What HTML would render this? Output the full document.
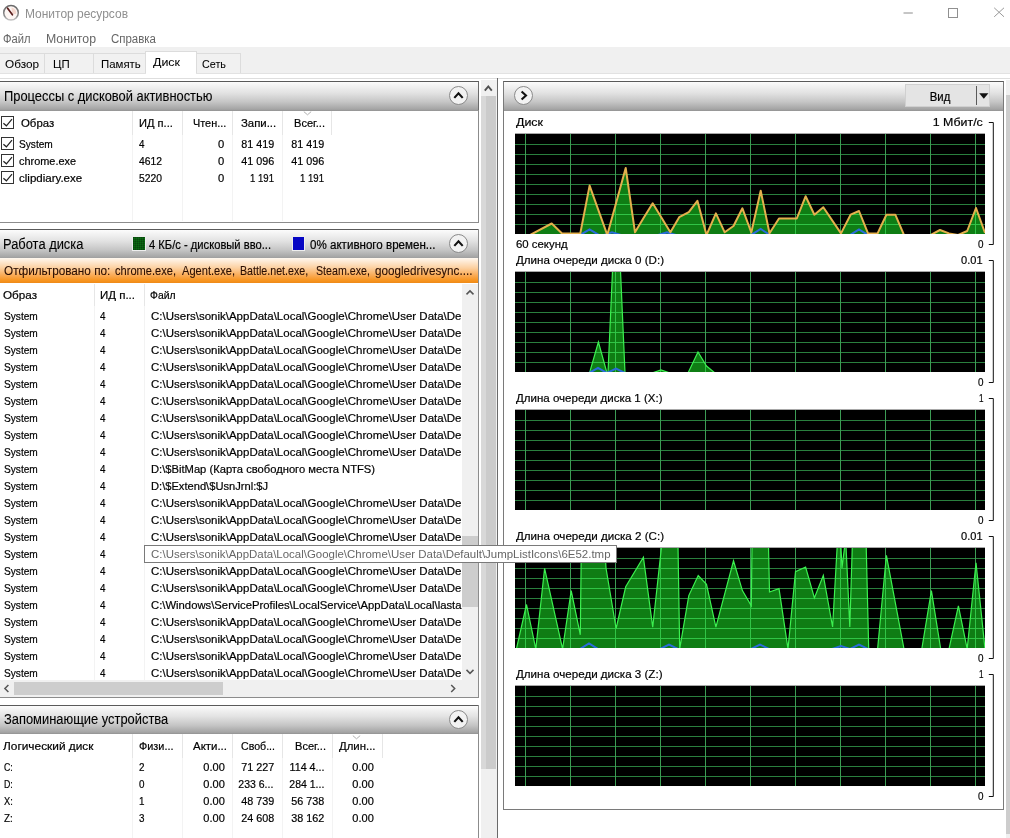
<!DOCTYPE html>
<html lang="ru"><head><meta charset="utf-8"><title>Монитор ресурсов</title>
<style>
html,body{margin:0;padding:0;}
body{width:1010px;height:838px;overflow:hidden;background:#fff;position:relative;font-family:"Liberation Sans",sans-serif;}
.a{position:absolute;}
.t{position:absolute;white-space:nowrap;}
#tx{position:absolute;left:0;top:0;width:1010px;height:838px;will-change:transform;}
.hdr{position:absolute;height:29px;border-top:1px solid #5a5a5a;background:linear-gradient(#fcfcfc 0%,#f2f2f2 14%,#e2e2e2 38%,#c6c6c6 68%,#a4a4a4 94%,#929292 100%);}
.circ{position:absolute;width:17px;height:17px;border:1px solid #8a8a8a;border-radius:50%;background:#f2f2f2;}
.cb{position:absolute;width:10px;height:10px;border:1px solid #333;background:#fff;}
.vd{position:absolute;width:1px;background:#e6e6e6;}
</style></head><body>
<svg class="a" style="left:1px;top:3px" width="20" height="20" viewBox="0 0 20 20">
<defs><linearGradient id="ig" x1="0" y1="0" x2="0" y2="1"><stop offset="0" stop-color="#6a6a6a"/><stop offset=".7" stop-color="#8a8a8a"/><stop offset="1" stop-color="#c4c4c4"/></linearGradient></defs>
<circle cx="10" cy="9.8" r="7.3" fill="#fdf6f3" stroke="url(#ig)" stroke-width="1.5"/>
<path d="M10.5 4.6 A5.3 5.3 0 0 1 15.2 10.8 L11.2 11.2 Z" fill="#f3cfc4" opacity=".8"/>
<path d="M6.6 5.2 L11.4 11.8" stroke="#5a1d1d" stroke-width="1.7" stroke-linecap="round"/>
</svg>
<svg class="a" style="left:890px;top:0" width="120" height="30" viewBox="0 0 120 30">
<path d="M13.5 13 H22.8" stroke="#8c8c8c" stroke-width="1"/>
<rect x="58.5" y="8.5" width="9" height="9" fill="none" stroke="#909090" stroke-width="1"/>
<path d="M104.2 7.8 L114 16.8 M114 7.8 L104.2 16.8" stroke="#9a9a9a" stroke-width="1"/>
</svg>
<div class="a" style="left:0px;top:47px;width:1010px;height:26px;background:#f0f0f0;"></div>
<div class="a" style="left:0px;top:53px;width:44px;height:20px;border:1px solid #dcdcdc;border-bottom:none;border-left:none;background:#f1f1f1;"></div>
<div class="a" style="left:45px;top:53px;width:47.5px;height:20px;border:1px solid #dcdcdc;border-bottom:none;border-left:none;background:#f1f1f1;"></div>
<div class="a" style="left:93.5px;top:53px;width:51.0px;height:20px;border:1px solid #dcdcdc;border-bottom:none;border-left:none;background:#f1f1f1;"></div>
<div class="a" style="left:196px;top:53px;width:44px;height:20px;border:1px solid #dcdcdc;border-bottom:none;border-left:none;background:#f1f1f1;"></div>
<div class="a" style="left:145px;top:51px;width:50px;height:22px;border:1px solid #dcdcdc;border-bottom:none;background:#fff;"></div>
<div class="a" style="left:0px;top:73px;width:1010px;height:1px;background:#e2e2e2;"></div>
<div class="a" style="left:146px;top:73px;width:50px;height:1px;background:#fff;"></div>
<div class="a" style="left:0px;top:77.5px;width:1010px;height:1px;background:#dedede;"></div>
<div class="hdr" style="left:0px;top:81px;width:478px;height:29px;border-right:1px solid #6a6a6a;"></div>
<div class="circ" style="left:449px;top:85.5px;width:17px;height:17px;"><svg width="17" height="17" viewBox="0 0 17 17" style="position:absolute;left:0;top:0"><path d="M4.3 10.9 L8.5 6.3 L12.7 10.9" fill="none" stroke="#111" stroke-width="2.1"/></svg></div>
<div class="a" style="left:0px;top:110px;width:478px;height:112px;border-right:1px solid #8c8c8c;border-bottom:1px solid #8c8c8c;box-sizing:border-box;width:479px;height:113px;"></div>
<div class="vd" style="left:131.5px;top:111px;width:1px;height:24px;"></div>
<div class="vd" style="left:181.5px;top:111px;width:1px;height:24px;"></div>
<div class="vd" style="left:231.5px;top:111px;width:1px;height:24px;"></div>
<div class="vd" style="left:281.5px;top:111px;width:1px;height:24px;"></div>
<div class="vd" style="left:331px;top:111px;width:1px;height:24px;"></div>
<div class="vd" style="left:131.5px;top:135px;width:1px;height:86px;background:#f3f3f3;"></div>
<div class="vd" style="left:181.5px;top:135px;width:1px;height:86px;background:#f3f3f3;"></div>
<div class="vd" style="left:231.5px;top:135px;width:1px;height:86px;background:#f3f3f3;"></div>
<div class="vd" style="left:281.5px;top:135px;width:1px;height:86px;background:#f3f3f3;"></div>
<div class="cb" style="left:1px;top:116px;width:10.5px;height:10.5px;"><svg width="11" height="11" viewBox="0 0 11 11" style="position:absolute;left:0;top:0"><path d="M1.4 6.2 L4.4 8.8 L10 2.2" fill="none" stroke="#222" stroke-width="1.2"/></svg></div>
<div class="cb" style="left:1px;top:137px;width:10.5px;height:10.5px;"><svg width="11" height="11" viewBox="0 0 11 11" style="position:absolute;left:0;top:0"><path d="M1.4 6.2 L4.4 8.8 L10 2.2" fill="none" stroke="#222" stroke-width="1.2"/></svg></div>
<div class="cb" style="left:1px;top:154px;width:10.5px;height:10.5px;"><svg width="11" height="11" viewBox="0 0 11 11" style="position:absolute;left:0;top:0"><path d="M1.4 6.2 L4.4 8.8 L10 2.2" fill="none" stroke="#222" stroke-width="1.2"/></svg></div>
<div class="cb" style="left:1px;top:171px;width:10.5px;height:10.5px;"><svg width="11" height="11" viewBox="0 0 11 11" style="position:absolute;left:0;top:0"><path d="M1.4 6.2 L4.4 8.8 L10 2.2" fill="none" stroke="#222" stroke-width="1.2"/></svg></div>
<svg class="a" style="left:303px;top:111px" width="9" height="5" viewBox="0 0 9 5"><path d="M0.8 0.6 L4.5 3.8 L8.2 0.6" fill="none" stroke="#b0b0b0" stroke-width="1"/></svg>
<div class="hdr" style="left:0px;top:229px;width:478px;height:29px;border-right:1px solid #6a6a6a;"></div>
<div class="circ" style="left:449px;top:233.5px;width:17px;height:17px;"><svg width="17" height="17" viewBox="0 0 17 17" style="position:absolute;left:0;top:0"><path d="M4.3 10.9 L8.5 6.3 L12.7 10.9" fill="none" stroke="#111" stroke-width="2.1"/></svg></div>
<div class="a" style="left:131.5px;top:236px;width:12px;height:13px;border:1px solid #eee;background:#0b6b12;background-image:repeating-linear-gradient(90deg,rgba(0,0,0,.18) 0 1px,transparent 1px 2px),repeating-linear-gradient(0deg,rgba(0,0,0,.18) 0 1px,transparent 1px 2px);"></div>
<div class="a" style="left:292px;top:236px;width:11px;height:13px;border:1px solid #eee;background:#0606c4;"></div>
<div class="a" style="left:0px;top:258.3px;width:478px;height:24.3px;background:linear-gradient(#fff8f0 0%,#fee9d2 15%,#fcd0a0 40%,#faac58 68%,#f7941f 90%,#ee8a18 100%);"></div>
<div class="a" style="left:478px;top:229px;width:1px;height:469px;background:#8c8c8c;"></div>
<div class="a" style="left:0px;top:697px;width:479px;height:1px;background:#8c8c8c;"></div>
<div class="vd" style="left:93.5px;top:284px;width:1px;height:22px;"></div>
<div class="vd" style="left:143.5px;top:284px;width:1px;height:22px;"></div>
<div class="vd" style="left:93.5px;top:306px;width:1px;height:374px;background:#f3f3f3;"></div>
<div class="vd" style="left:143.5px;top:306px;width:1px;height:374px;background:#f3f3f3;"></div>
<div class="a" style="left:462px;top:284px;width:16px;height:396px;background:#f0f0f0;"></div>
<div class="a" style="left:462px;top:536px;width:16px;height:71px;background:#cdcdcd;"></div>
<svg class="a" style="left:462px;top:284px" width="16" height="16" viewBox="0 0 16 16"><path d="M4.5 10.4 L8 6.9 L11.5 10.4" fill="none" stroke="#555" stroke-width="1.5"/></svg>
<svg class="a" style="left:462px;top:664px" width="16" height="16" viewBox="0 0 16 16"><path d="M4.5 5.9 L8 9.4 L11.5 5.9" fill="none" stroke="#555" stroke-width="1.5"/></svg>
<div class="a" style="left:0px;top:680px;width:478px;height:17px;background:#f0f0f0;"></div>
<div class="a" style="left:14px;top:682px;width:209px;height:13px;background:#cdcdcd;"></div>
<svg class="a" style="left:0;top:680px" width="16" height="17" viewBox="0 0 16 17"><path d="M8.4 5 L4.9 8.5 L8.4 12" fill="none" stroke="#555" stroke-width="1.5"/></svg>
<svg class="a" style="left:445px;top:680px" width="16" height="17" viewBox="0 0 16 17"><path d="M6.2 5 L9.7 8.5 L6.2 12" fill="none" stroke="#555" stroke-width="1.5"/></svg>
<div class="hdr" style="left:0px;top:704.5px;width:478px;height:28.6px;border-right:1px solid #6a6a6a;"></div>
<div class="circ" style="left:449px;top:709.5px;width:17px;height:17px;"><svg width="17" height="17" viewBox="0 0 17 17" style="position:absolute;left:0;top:0"><path d="M4.3 10.9 L8.5 6.3 L12.7 10.9" fill="none" stroke="#111" stroke-width="2.1"/></svg></div>
<div class="a" style="left:478px;top:705px;width:1px;height:133px;background:#8c8c8c;"></div>
<div class="vd" style="left:131.5px;top:734px;width:1px;height:24px;"></div>
<div class="vd" style="left:181.5px;top:734px;width:1px;height:24px;"></div>
<div class="vd" style="left:231.5px;top:734px;width:1px;height:24px;"></div>
<div class="vd" style="left:281.5px;top:734px;width:1px;height:24px;"></div>
<div class="vd" style="left:331.5px;top:734px;width:1px;height:24px;"></div>
<div class="vd" style="left:381.5px;top:734px;width:1px;height:24px;"></div>
<div class="vd" style="left:131.5px;top:758px;width:1px;height:80px;background:#f3f3f3;"></div>
<div class="vd" style="left:181.5px;top:758px;width:1px;height:80px;background:#f3f3f3;"></div>
<div class="vd" style="left:231.5px;top:758px;width:1px;height:80px;background:#f3f3f3;"></div>
<div class="vd" style="left:281.5px;top:758px;width:1px;height:80px;background:#f3f3f3;"></div>
<div class="vd" style="left:331.5px;top:758px;width:1px;height:80px;background:#f3f3f3;"></div>
<svg class="a" style="left:352px;top:735px" width="9" height="5" viewBox="0 0 9 5"><path d="M0.8 0.6 L4.5 3.8 L8.2 0.6" fill="none" stroke="#b0b0b0" stroke-width="1"/></svg>
<div class="a" style="left:481px;top:80px;width:16px;height:758px;background:#f0f0f0;"></div>
<div class="a" style="left:481px;top:96px;width:15px;height:673px;background:linear-gradient(90deg,#d8d8d8 0,#d8d8d8 4.5px,#cbcbcb 4.5px);"></div>
<svg class="a" style="left:481px;top:80px" width="15" height="16" viewBox="0 0 15 16"><path d="M3.8 10.6 L7.3 6.4 L10.8 10.6" fill="none" stroke="#505050" stroke-width="1.9"/></svg>
<div class="a" style="left:497px;top:78px;width:1px;height:760px;background:#6a6a6a;"></div>
<div class="a" style="left:503px;top:81px;width:499px;height:727px;border:1px solid #7a7a7a;border-top-color:#5a5a5a;background:#fff;"></div>
<div class="a" style="left:504px;top:82px;width:499px;height:29px;background:linear-gradient(#fcfcfc 0%,#f2f2f2 14%,#e2e2e2 38%,#c6c6c6 68%,#a4a4a4 94%,#929292 100%);"></div>
<div class="circ" style="left:514.2px;top:85.8px;width:17px;height:17px;"><svg width="17" height="17" viewBox="0 0 17 17" style="position:absolute;left:0;top:0"><path d="M6.6 4.4 L11 8.5 L6.6 12.6" fill="none" stroke="#111" stroke-width="2.1"/></svg></div>
<div class="a" style="left:905px;top:84px;width:85px;height:23px;background:#e4e4e4;border:1px solid #d0d0d0;box-sizing:border-box;"></div>
<div class="a" style="left:976px;top:86px;width:1.2px;height:19px;background:#5a5a5a;"></div>
<svg class="a" style="left:977.5px;top:92px" width="12" height="8" viewBox="0 0 12 8"><path d="M1.2 1.2 H10.4 L5.8 6.8 Z" fill="#111"/></svg>
<div class="a" style="left:1006px;top:80px;width:4px;height:758px;background:#f0f0f0;"></div>
<div class="a" style="left:1006.3px;top:95px;width:4px;height:739px;background:#cdcdcd;"></div>
<svg class="a" style="left:0;top:0" width="1010" height="838" viewBox="0 0 1010 838">
<defs>
<clipPath id="cp0"><rect x="515" y="134" width="470" height="100"/></clipPath>
<clipPath id="cpf0"><polygon points="515.0,235.0 530.0,235.0 551.7,223.5 561.8,233.2 580.3,233.4 589.6,185.6 607.3,235.0 625.7,168.0 635.0,232.3 643.4,218.2 652.7,203.3 670.4,232.3 679.2,217.2 688.8,212.1 697.4,200.8 706.5,235.0 715.9,213.4 724.7,232.3 733.5,226.0 742.4,208.3 751.3,232.5 760.7,190.8 769.5,233.2 779.0,218.5 796.8,218.5 805.6,196.3 814.4,214.7 823.3,207.2 841.0,233.4 850.6,214.7 859.0,211.0 868.0,233.4 877.6,233.4 886.4,214.7 895.3,214.7 904.0,235.0 930.6,235.0 940.0,230.0 949.0,233.4 958.0,235.0 967.2,231.0 976.0,208.0 985.0,233.0 985,236 515,236"/></clipPath>
<clipPath id="cp1"><rect x="515" y="272" width="470" height="100"/></clipPath>
<clipPath id="cpf1"><polygon points="589.5,373.0 598.4,342.0 607.0,373.0 608.0,373.0 612.5,271.0 620.5,271.0 625.0,373.0 652.0,373.0 661.0,370.0 670.0,373.0 688.0,373.0 698.0,352.0 706.5,366.0 715.0,373.0 985,374 515,374"/></clipPath>
<clipPath id="cp2"><rect x="515" y="410" width="470" height="100"/></clipPath>
<clipPath id="cp3"><rect x="515" y="548" width="470" height="100"/></clipPath>
<clipPath id="cpf3"><polygon points="516.4,649.0 526.5,604.5 535.8,649.0 544.6,568.4 562.6,649.0 571.2,590.6 580.3,634.8 581.3,546.0 604.7,546.0 606.0,568.0 616.1,628.5 625.7,586.8 643.4,557.3 652.7,627.2 661.6,546.0 678.0,546.0 679.7,649.0 688.8,595.6 698.2,575.5 706.5,584.3 715.9,627.2 733.5,560.8 742.4,590.6 751.3,605.8 752.0,546.0 768.5,546.0 769.5,592.0 779.0,588.6 788.0,649.0 795.5,571.7 805.6,567.0 814.4,598.0 823.3,575.5 832.6,627.0 837.2,546.0 840.9,546.0 842.0,568.0 844.7,546.0 846.0,546.0 849.8,627.0 852.3,546.0 866.2,546.0 868.7,649.0 877.6,649.0 886.4,555.3 904.0,649.0 921.8,649.0 931.4,590.6 940.7,649.0 949.0,649.0 958.4,605.8 967.2,649.0 976.0,562.8 985.0,649.0 985,650 515,650"/></clipPath>
<clipPath id="cp4"><rect x="515" y="686" width="470" height="100"/></clipPath>
</defs>
<rect x="515" y="133" width="470" height="101" fill="#000"/>
<rect x="515" y="133" width="470" height="1" fill="#a8a8a8"/>
<path d="M515 144.5 H985 M515 154.5 H985 M515 164.5 H985 M515 174.5 H985 M515 184.5 H985 M515 194.5 H985 M515 204.5 H985 M515 214.5 H985 M515 224.5 H985" stroke="#2a7f3e" stroke-width="1" fill="none"/><path d="M525.5 134 V234 M570.5 134 V234 M615.5 134 V234 M660.5 134 V234 M705.5 134 V234 M750.5 134 V234 M795.5 134 V234 M840.5 134 V234 M885.5 134 V234 M930.5 134 V234 M975.5 134 V234" stroke="#3c9c54" stroke-width="1" fill="none"/>
<g clip-path="url(#cp0)">
<polygon points="515.0,235.0 530.0,235.0 551.7,223.5 561.8,233.2 580.3,233.4 589.6,185.6 607.3,235.0 625.7,168.0 635.0,232.3 643.4,218.2 652.7,203.3 670.4,232.3 679.2,217.2 688.8,212.1 697.4,200.8 706.5,235.0 715.9,213.4 724.7,232.3 733.5,226.0 742.4,208.3 751.3,232.5 760.7,190.8 769.5,233.2 779.0,218.5 796.8,218.5 805.6,196.3 814.4,214.7 823.3,207.2 841.0,233.4 850.6,214.7 859.0,211.0 868.0,233.4 877.6,233.4 886.4,214.7 895.3,214.7 904.0,235.0 930.6,235.0 940.0,230.0 949.0,233.4 958.0,235.0 967.2,231.0 976.0,208.0 985.0,233.0 985,236 515,236" fill="#0f7d14"/>
<path d="M515 144.5 H985 M515 154.5 H985 M515 164.5 H985 M515 174.5 H985 M515 184.5 H985 M515 194.5 H985 M515 204.5 H985 M515 214.5 H985 M515 224.5 H985 M525.5 134 V234 M570.5 134 V234 M615.5 134 V234 M660.5 134 V234 M705.5 134 V234 M750.5 134 V234 M795.5 134 V234 M840.5 134 V234 M885.5 134 V234 M930.5 134 V234 M975.5 134 V234" stroke="#30c446" stroke-width="1" fill="none" clip-path="url(#cpf0)"/>
<polyline points="515.0,235.0 580.0,235.0 589.6,229.5 599.0,235.0 604.0,235.0 612.0,232.2 621.0,235.0 658.0,235.0 667.0,232.4 676.0,235.0 751.0,235.0 760.7,229.0 770.0,235.0 850.0,235.0 859.0,229.5 868.0,235.0 985.0,235.0" fill="none" stroke="#2b6bdc" stroke-width="2"/>
<polyline points="515.0,235.0 530.0,235.0 551.7,223.5 561.8,233.2 580.3,233.4 589.6,185.6 607.3,235.0 625.7,168.0 635.0,232.3 643.4,218.2 652.7,203.3 670.4,232.3 679.2,217.2 688.8,212.1 697.4,200.8 706.5,235.0 715.9,213.4 724.7,232.3 733.5,226.0 742.4,208.3 751.3,232.5 760.7,190.8 769.5,233.2 779.0,218.5 796.8,218.5 805.6,196.3 814.4,214.7 823.3,207.2 841.0,233.4 850.6,214.7 859.0,211.0 868.0,233.4 877.6,233.4 886.4,214.7 895.3,214.7 904.0,235.0 930.6,235.0 940.0,230.0 949.0,233.4 958.0,235.0 967.2,231.0 976.0,208.0 985.0,233.0" fill="none" stroke="#e4b04c" stroke-width="2.0" stroke-linejoin="round"/>
</g>
<path d="M988.8 122.5 H993.3 V244.5 H988.8" fill="none" stroke="#111" stroke-width="1"/>
<rect x="515" y="271" width="470" height="101" fill="#000"/>
<rect x="515" y="271" width="470" height="1" fill="#a8a8a8"/>
<path d="M515 282.5 H985 M515 292.5 H985 M515 302.5 H985 M515 312.5 H985 M515 322.5 H985 M515 332.5 H985 M515 342.5 H985 M515 352.5 H985 M515 362.5 H985" stroke="#2a7f3e" stroke-width="1" fill="none"/><path d="M525.5 272 V372 M570.5 272 V372 M615.5 272 V372 M660.5 272 V372 M705.5 272 V372 M750.5 272 V372 M795.5 272 V372 M840.5 272 V372 M885.5 272 V372 M930.5 272 V372 M975.5 272 V372" stroke="#3c9c54" stroke-width="1" fill="none"/>
<g clip-path="url(#cp1)">
<polygon points="589.5,373.0 598.4,342.0 607.0,373.0 608.0,373.0 612.5,271.0 620.5,271.0 625.0,373.0 652.0,373.0 661.0,370.0 670.0,373.0 688.0,373.0 698.0,352.0 706.5,366.0 715.0,373.0 985,374 515,374" fill="#0f7d14"/>
<path d="M515 282.5 H985 M515 292.5 H985 M515 302.5 H985 M515 312.5 H985 M515 322.5 H985 M515 332.5 H985 M515 342.5 H985 M515 352.5 H985 M515 362.5 H985 M525.5 272 V372 M570.5 272 V372 M615.5 272 V372 M660.5 272 V372 M705.5 272 V372 M750.5 272 V372 M795.5 272 V372 M840.5 272 V372 M885.5 272 V372 M930.5 272 V372 M975.5 272 V372" stroke="#30c446" stroke-width="1" fill="none" clip-path="url(#cpf1)"/>
<polyline points="589.5,373.0 598.4,342.0 607.0,373.0 608.0,373.0 612.5,271.0 620.5,271.0 625.0,373.0 652.0,373.0 661.0,370.0 670.0,373.0 688.0,373.0 698.0,352.0 706.5,366.0 715.0,373.0" fill="none" stroke="#3cf050" stroke-width="1.2"/>
<polyline points="515.0,373.0 589.0,373.0 598.0,368.0 607.0,373.0 616.0,368.5 625.0,373.0 985.0,373.0" fill="none" stroke="#2b6bdc" stroke-width="2"/>
</g>
<path d="M988.8 260.5 H993.3 V382.5 H988.8" fill="none" stroke="#111" stroke-width="1"/>
<rect x="515" y="409" width="470" height="101" fill="#000"/>
<rect x="515" y="409" width="470" height="1" fill="#a8a8a8"/>
<path d="M515 420.5 H985 M515 430.5 H985 M515 440.5 H985 M515 450.5 H985 M515 460.5 H985 M515 470.5 H985 M515 480.5 H985 M515 490.5 H985 M515 500.5 H985" stroke="#2a7f3e" stroke-width="1" fill="none"/><path d="M525.5 410 V510 M570.5 410 V510 M615.5 410 V510 M660.5 410 V510 M705.5 410 V510 M750.5 410 V510 M795.5 410 V510 M840.5 410 V510 M885.5 410 V510 M930.5 410 V510 M975.5 410 V510" stroke="#3c9c54" stroke-width="1" fill="none"/>
<path d="M988.8 398.5 H993.3 V520.5 H988.8" fill="none" stroke="#111" stroke-width="1"/>
<rect x="515" y="547" width="470" height="101" fill="#000"/>
<rect x="515" y="547" width="470" height="1" fill="#a8a8a8"/>
<path d="M515 558.5 H985 M515 568.5 H985 M515 578.5 H985 M515 588.5 H985 M515 598.5 H985 M515 608.5 H985 M515 618.5 H985 M515 628.5 H985 M515 638.5 H985" stroke="#2a7f3e" stroke-width="1" fill="none"/><path d="M525.5 548 V648 M570.5 548 V648 M615.5 548 V648 M660.5 548 V648 M705.5 548 V648 M750.5 548 V648 M795.5 548 V648 M840.5 548 V648 M885.5 548 V648 M930.5 548 V648 M975.5 548 V648" stroke="#3c9c54" stroke-width="1" fill="none"/>
<g clip-path="url(#cp3)">
<polygon points="516.4,649.0 526.5,604.5 535.8,649.0 544.6,568.4 562.6,649.0 571.2,590.6 580.3,634.8 581.3,546.0 604.7,546.0 606.0,568.0 616.1,628.5 625.7,586.8 643.4,557.3 652.7,627.2 661.6,546.0 678.0,546.0 679.7,649.0 688.8,595.6 698.2,575.5 706.5,584.3 715.9,627.2 733.5,560.8 742.4,590.6 751.3,605.8 752.0,546.0 768.5,546.0 769.5,592.0 779.0,588.6 788.0,649.0 795.5,571.7 805.6,567.0 814.4,598.0 823.3,575.5 832.6,627.0 837.2,546.0 840.9,546.0 842.0,568.0 844.7,546.0 846.0,546.0 849.8,627.0 852.3,546.0 866.2,546.0 868.7,649.0 877.6,649.0 886.4,555.3 904.0,649.0 921.8,649.0 931.4,590.6 940.7,649.0 949.0,649.0 958.4,605.8 967.2,649.0 976.0,562.8 985.0,649.0 985,650 515,650" fill="#0f7d14"/>
<path d="M515 558.5 H985 M515 568.5 H985 M515 578.5 H985 M515 588.5 H985 M515 598.5 H985 M515 608.5 H985 M515 618.5 H985 M515 628.5 H985 M515 638.5 H985 M525.5 548 V648 M570.5 548 V648 M615.5 548 V648 M660.5 548 V648 M705.5 548 V648 M750.5 548 V648 M795.5 548 V648 M840.5 548 V648 M885.5 548 V648 M930.5 548 V648 M975.5 548 V648" stroke="#30c446" stroke-width="1" fill="none" clip-path="url(#cpf3)"/>
<polyline points="516.4,649.0 526.5,604.5 535.8,649.0 544.6,568.4 562.6,649.0 571.2,590.6 580.3,634.8 581.3,546.0 604.7,546.0 606.0,568.0 616.1,628.5 625.7,586.8 643.4,557.3 652.7,627.2 661.6,546.0 678.0,546.0 679.7,649.0 688.8,595.6 698.2,575.5 706.5,584.3 715.9,627.2 733.5,560.8 742.4,590.6 751.3,605.8 752.0,546.0 768.5,546.0 769.5,592.0 779.0,588.6 788.0,649.0 795.5,571.7 805.6,567.0 814.4,598.0 823.3,575.5 832.6,627.0 837.2,546.0 840.9,546.0 842.0,568.0 844.7,546.0 846.0,546.0 849.8,627.0 852.3,546.0 866.2,546.0 868.7,649.0 877.6,649.0 886.4,555.3 904.0,649.0 921.8,649.0 931.4,590.6 940.7,649.0 949.0,649.0 958.4,605.8 967.2,649.0 976.0,562.8 985.0,649.0" fill="none" stroke="#3cf050" stroke-width="1.2"/>
<polyline points="515.0,649.0 580.0,649.0 589.0,643.5 598.0,649.0 660.0,649.0 669.0,644.5 678.0,649.0 751.0,649.0 760.0,644.5 769.0,649.0 832.0,649.0 841.0,646.0 850.0,649.0 859.0,644.5 868.0,649.0 985.0,649.0" fill="none" stroke="#2b6bdc" stroke-width="2"/>
</g>
<path d="M988.8 536.5 H993.3 V658.5 H988.8" fill="none" stroke="#111" stroke-width="1"/>
<rect x="515" y="685" width="470" height="101" fill="#000"/>
<rect x="515" y="685" width="470" height="1" fill="#a8a8a8"/>
<path d="M515 696.5 H985 M515 706.5 H985 M515 716.5 H985 M515 726.5 H985 M515 736.5 H985 M515 746.5 H985 M515 756.5 H985 M515 766.5 H985 M515 776.5 H985" stroke="#2a7f3e" stroke-width="1" fill="none"/><path d="M525.5 686 V786 M570.5 686 V786 M615.5 686 V786 M660.5 686 V786 M705.5 686 V786 M750.5 686 V786 M795.5 686 V786 M840.5 686 V786 M885.5 686 V786 M930.5 686 V786 M975.5 686 V786" stroke="#3c9c54" stroke-width="1" fill="none"/>
<path d="M988.8 674.5 H993.3 V796.5 H988.8" fill="none" stroke="#111" stroke-width="1"/>
</svg>
<div class="a" style="left:144px;top:545px;width:471px;height:16px;border:1px solid #7a7a7a;background:#fff;"></div>
<div id="tx">
<span class="t" id="t0" style="top:7.00px;font-size:12.3px;line-height:14px;color:#8f8f8f;left:25.2px;transform-origin:0 0;transform:scaleX(0.9734);">Монитор ресурсов</span>
<span class="t" id="t1" style="top:32.00px;font-size:12px;line-height:14px;color:#666;left:3px;transform-origin:0 0;transform:scaleX(0.9317);">Файл</span>
<span class="t" id="t2" style="top:32.00px;font-size:12px;line-height:14px;color:#666;left:45.8px;transform-origin:0 0;transform:scaleX(1.0237);">Монитор</span>
<span class="t" id="t3" style="top:32.00px;font-size:12px;line-height:14px;color:#666;left:110.7px;transform-origin:0 0;transform:scaleX(0.9559);">Справка</span>
<span class="t" id="t4" style="top:57.00px;font-size:11.8px;line-height:14px;color:#000;left:4.6px;transform-origin:0 0;transform:scaleX(0.9977);-webkit-text-stroke:0.05px currentColor;">Обзор</span>
<span class="t" id="t5" style="top:57.00px;font-size:11.8px;line-height:14px;color:#000;left:52.8px;transform-origin:0 0;transform:scaleX(0.9699);-webkit-text-stroke:0.05px currentColor;">ЦП</span>
<span class="t" id="t6" style="top:57.00px;font-size:11.8px;line-height:14px;color:#000;left:101px;transform-origin:0 0;transform:scaleX(0.9685);-webkit-text-stroke:0.05px currentColor;">Память</span>
<span class="t" id="t7" style="top:55.00px;font-size:11.8px;line-height:14px;color:#000;left:153px;transform-origin:0 0;transform:scaleX(1.0530);-webkit-text-stroke:0.05px currentColor;">Диск</span>
<span class="t" id="t8" style="top:57.00px;font-size:11.8px;line-height:14px;color:#000;left:202px;transform-origin:0 0;transform:scaleX(0.9143);-webkit-text-stroke:0.05px currentColor;">Сеть</span>
<span class="t" id="t9" style="top:88.00px;font-size:14px;line-height:16px;color:#000;left:3.6px;transform-origin:0 0;transform:scaleX(0.9204);-webkit-text-stroke:0.1px currentColor;">Процессы с дисковой активностью</span>
<span class="t" id="t10" style="top:117.00px;font-size:11.2px;line-height:12px;color:#000;left:21px;transform-origin:0 0;transform:scaleX(1.0196);-webkit-text-stroke:0.2px currentColor;">Образ</span>
<span class="t" id="t11" style="top:117.00px;font-size:11.2px;line-height:12px;color:#000;left:139px;transform-origin:0 0;transform:scaleX(0.9909);-webkit-text-stroke:0.2px currentColor;">ИД п...</span>
<span class="t" id="t12" style="top:117.00px;font-size:11.2px;line-height:12px;color:#000;left:192.8px;transform-origin:0 0;transform:scaleX(0.9711);-webkit-text-stroke:0.2px currentColor;">Чтен...</span>
<span class="t" id="t13" style="top:117.00px;font-size:11.2px;line-height:12px;color:#000;left:240.8px;transform-origin:0 0;transform:scaleX(1.0166);-webkit-text-stroke:0.2px currentColor;">Запи...</span>
<span class="t" id="t14" style="top:117.00px;font-size:11.2px;line-height:12px;color:#000;left:294.3px;transform-origin:0 0;transform:scaleX(0.9895);-webkit-text-stroke:0.2px currentColor;">Всег...</span>
<span class="t" id="t15" style="top:138.00px;font-size:11.2px;line-height:12px;color:#000;left:19.2px;transform-origin:0 0;transform:scaleX(0.9059);-webkit-text-stroke:0.2px currentColor;">System</span>
<span class="t" id="t16" style="top:138.00px;font-size:11.2px;line-height:12px;color:#000;left:138.5px;transform-origin:0 0;transform:scaleX(0.8822);-webkit-text-stroke:0.2px currentColor;">4</span>
<span class="t" id="t17" style="top:138.00px;font-size:11.2px;line-height:12px;color:#000;right:785.7px;transform-origin:100% 0;-webkit-text-stroke:0.2px currentColor;">0</span>
<span class="t" id="t18" style="top:138.00px;font-size:11.2px;line-height:12px;color:#000;right:736.2px;transform-origin:100% 0;transform:scaleX(0.9644);-webkit-text-stroke:0.2px currentColor;">81 419</span>
<span class="t" id="t19" style="top:138.00px;font-size:11.2px;line-height:12px;color:#000;right:686px;transform-origin:100% 0;transform:scaleX(0.9644);-webkit-text-stroke:0.2px currentColor;">81 419</span>
<span class="t" id="t20" style="top:155.00px;font-size:11.2px;line-height:12px;color:#000;left:19.2px;transform-origin:0 0;transform:scaleX(0.9751);-webkit-text-stroke:0.2px currentColor;">chrome.exe</span>
<span class="t" id="t21" style="top:155.00px;font-size:11.2px;line-height:12px;color:#000;left:138.5px;transform-origin:0 0;transform:scaleX(0.9240);-webkit-text-stroke:0.2px currentColor;">4612</span>
<span class="t" id="t22" style="top:155.00px;font-size:11.2px;line-height:12px;color:#000;right:785.7px;transform-origin:100% 0;-webkit-text-stroke:0.2px currentColor;">0</span>
<span class="t" id="t23" style="top:155.00px;font-size:11.2px;line-height:12px;color:#000;right:736.2px;transform-origin:100% 0;transform:scaleX(0.9644);-webkit-text-stroke:0.2px currentColor;">41 096</span>
<span class="t" id="t24" style="top:155.00px;font-size:11.2px;line-height:12px;color:#000;right:686px;transform-origin:100% 0;transform:scaleX(0.9644);-webkit-text-stroke:0.2px currentColor;">41 096</span>
<span class="t" id="t25" style="top:172.00px;font-size:11.2px;line-height:12px;color:#000;left:19.2px;transform-origin:0 0;transform:scaleX(1.0300);-webkit-text-stroke:0.2px currentColor;">clipdiary.exe</span>
<span class="t" id="t26" style="top:172.00px;font-size:11.2px;line-height:12px;color:#000;left:138.5px;transform-origin:0 0;transform:scaleX(0.9240);-webkit-text-stroke:0.2px currentColor;">5220</span>
<span class="t" id="t27" style="top:172.00px;font-size:11.2px;line-height:12px;color:#000;right:785.7px;transform-origin:100% 0;-webkit-text-stroke:0.2px currentColor;">0</span>
<span class="t" id="t28" style="top:172.00px;font-size:11.2px;line-height:12px;color:#000;right:736.2px;transform-origin:100% 0;transform:scaleX(0.8571);-webkit-text-stroke:0.2px currentColor;">1 191</span>
<span class="t" id="t29" style="top:172.00px;font-size:11.2px;line-height:12px;color:#000;right:686px;transform-origin:100% 0;transform:scaleX(0.8571);-webkit-text-stroke:0.2px currentColor;">1 191</span>
<span class="t" id="t30" style="top:236.00px;font-size:14px;line-height:16px;color:#000;left:3.0px;transform-origin:0 0;transform:scaleX(0.9210);-webkit-text-stroke:0.1px currentColor;">Работа диска</span>
<span class="t" id="t31" style="top:238.00px;font-size:12px;line-height:14px;color:#000;left:149.2px;transform-origin:0 0;transform:scaleX(0.9315);-webkit-text-stroke:0.2px currentColor;">4 КБ/с - дисковый вво...</span>
<span class="t" id="t32" style="top:238.00px;font-size:12px;line-height:14px;color:#000;left:309.8px;transform-origin:0 0;transform:scaleX(0.9653);-webkit-text-stroke:0.2px currentColor;">0% активного времен...</span>
<span class="t" id="t33" style="top:263.00px;font-size:13px;line-height:15px;color:#2a0e00;left:3.5px;transform-origin:0 0;transform:scaleX(0.9032);-webkit-text-stroke:0.1px currentColor;">Отфильтровано по:</span>
<span class="t" id="t34" style="top:263.00px;font-size:13px;line-height:15px;color:#2a0e00;left:114.8px;transform-origin:0 0;transform:scaleX(0.8526);-webkit-text-stroke:0.1px currentColor;">chrome.exe,</span>
<span class="t" id="t35" style="top:263.00px;font-size:13px;line-height:15px;color:#2a0e00;left:181.8px;transform-origin:0 0;transform:scaleX(0.8527);-webkit-text-stroke:0.1px currentColor;">Agent.exe,</span>
<span class="t" id="t36" style="top:263.00px;font-size:13px;line-height:15px;color:#2a0e00;left:240.2px;transform-origin:0 0;transform:scaleX(0.8205);-webkit-text-stroke:0.1px currentColor;">Battle.net.exe,</span>
<span class="t" id="t37" style="top:263.00px;font-size:13px;line-height:15px;color:#2a0e00;left:315.6px;transform-origin:0 0;transform:scaleX(0.8196);-webkit-text-stroke:0.1px currentColor;">Steam.exe,</span>
<span class="t" id="t38" style="top:263.00px;font-size:13px;line-height:15px;color:#2a0e00;left:375px;transform-origin:0 0;transform:scaleX(0.8985);-webkit-text-stroke:0.1px currentColor;">googledrivesync....</span>
<span class="t" id="t39" style="top:289.00px;font-size:11.2px;line-height:12px;color:#000;left:3.3px;transform-origin:0 0;transform:scaleX(1.0441);-webkit-text-stroke:0.2px currentColor;">Образ</span>
<span class="t" id="t40" style="top:289.00px;font-size:11.2px;line-height:12px;color:#000;left:100px;transform-origin:0 0;transform:scaleX(1.0261);-webkit-text-stroke:0.2px currentColor;">ИД п...</span>
<span class="t" id="t41" style="top:289.00px;font-size:11.2px;line-height:12px;color:#000;left:150px;transform-origin:0 0;transform:scaleX(0.9267);-webkit-text-stroke:0.2px currentColor;">Файл</span>
<span class="t" id="t42" style="top:310.00px;font-size:11.2px;line-height:12px;color:#000;left:3.6px;transform-origin:0 0;transform:scaleX(0.9059);-webkit-text-stroke:0.2px currentColor;">System</span>
<span class="t" id="t43" style="top:310.00px;font-size:11.2px;line-height:12px;color:#000;left:100px;transform-origin:0 0;transform:scaleX(0.8822);-webkit-text-stroke:0.2px currentColor;">4</span>
<span class="t" id="t44" style="top:310.00px;font-size:11.2px;line-height:12px;color:#000;left:151px;transform-origin:0 0;transform:scaleX(1.0275);-webkit-text-stroke:0.2px currentColor;white-space:pre;">C:\Users\sonik\AppData\Local\Google\Chrome\User Data\De</span>
<span class="t" id="t45" style="top:327.00px;font-size:11.2px;line-height:12px;color:#000;left:3.6px;transform-origin:0 0;transform:scaleX(0.9059);-webkit-text-stroke:0.2px currentColor;">System</span>
<span class="t" id="t46" style="top:327.00px;font-size:11.2px;line-height:12px;color:#000;left:100px;transform-origin:0 0;transform:scaleX(0.8822);-webkit-text-stroke:0.2px currentColor;">4</span>
<span class="t" id="t47" style="top:327.00px;font-size:11.2px;line-height:12px;color:#000;left:151px;transform-origin:0 0;transform:scaleX(1.0275);-webkit-text-stroke:0.2px currentColor;white-space:pre;">C:\Users\sonik\AppData\Local\Google\Chrome\User Data\De</span>
<span class="t" id="t48" style="top:344.00px;font-size:11.2px;line-height:12px;color:#000;left:3.6px;transform-origin:0 0;transform:scaleX(0.9059);-webkit-text-stroke:0.2px currentColor;">System</span>
<span class="t" id="t49" style="top:344.00px;font-size:11.2px;line-height:12px;color:#000;left:100px;transform-origin:0 0;transform:scaleX(0.8822);-webkit-text-stroke:0.2px currentColor;">4</span>
<span class="t" id="t50" style="top:344.00px;font-size:11.2px;line-height:12px;color:#000;left:151px;transform-origin:0 0;transform:scaleX(1.0275);-webkit-text-stroke:0.2px currentColor;white-space:pre;">C:\Users\sonik\AppData\Local\Google\Chrome\User Data\De</span>
<span class="t" id="t51" style="top:361.00px;font-size:11.2px;line-height:12px;color:#000;left:3.6px;transform-origin:0 0;transform:scaleX(0.9059);-webkit-text-stroke:0.2px currentColor;">System</span>
<span class="t" id="t52" style="top:361.00px;font-size:11.2px;line-height:12px;color:#000;left:100px;transform-origin:0 0;transform:scaleX(0.8822);-webkit-text-stroke:0.2px currentColor;">4</span>
<span class="t" id="t53" style="top:361.00px;font-size:11.2px;line-height:12px;color:#000;left:151px;transform-origin:0 0;transform:scaleX(1.0275);-webkit-text-stroke:0.2px currentColor;white-space:pre;">C:\Users\sonik\AppData\Local\Google\Chrome\User Data\De</span>
<span class="t" id="t54" style="top:378.00px;font-size:11.2px;line-height:12px;color:#000;left:3.6px;transform-origin:0 0;transform:scaleX(0.9059);-webkit-text-stroke:0.2px currentColor;">System</span>
<span class="t" id="t55" style="top:378.00px;font-size:11.2px;line-height:12px;color:#000;left:100px;transform-origin:0 0;transform:scaleX(0.8822);-webkit-text-stroke:0.2px currentColor;">4</span>
<span class="t" id="t56" style="top:378.00px;font-size:11.2px;line-height:12px;color:#000;left:151px;transform-origin:0 0;transform:scaleX(1.0275);-webkit-text-stroke:0.2px currentColor;white-space:pre;">C:\Users\sonik\AppData\Local\Google\Chrome\User Data\De</span>
<span class="t" id="t57" style="top:395.00px;font-size:11.2px;line-height:12px;color:#000;left:3.6px;transform-origin:0 0;transform:scaleX(0.9059);-webkit-text-stroke:0.2px currentColor;">System</span>
<span class="t" id="t58" style="top:395.00px;font-size:11.2px;line-height:12px;color:#000;left:100px;transform-origin:0 0;transform:scaleX(0.8822);-webkit-text-stroke:0.2px currentColor;">4</span>
<span class="t" id="t59" style="top:395.00px;font-size:11.2px;line-height:12px;color:#000;left:151px;transform-origin:0 0;transform:scaleX(1.0275);-webkit-text-stroke:0.2px currentColor;white-space:pre;">C:\Users\sonik\AppData\Local\Google\Chrome\User Data\De</span>
<span class="t" id="t60" style="top:412.00px;font-size:11.2px;line-height:12px;color:#000;left:3.6px;transform-origin:0 0;transform:scaleX(0.9059);-webkit-text-stroke:0.2px currentColor;">System</span>
<span class="t" id="t61" style="top:412.00px;font-size:11.2px;line-height:12px;color:#000;left:100px;transform-origin:0 0;transform:scaleX(0.8822);-webkit-text-stroke:0.2px currentColor;">4</span>
<span class="t" id="t62" style="top:412.00px;font-size:11.2px;line-height:12px;color:#000;left:151px;transform-origin:0 0;transform:scaleX(1.0275);-webkit-text-stroke:0.2px currentColor;white-space:pre;">C:\Users\sonik\AppData\Local\Google\Chrome\User Data\De</span>
<span class="t" id="t63" style="top:429.00px;font-size:11.2px;line-height:12px;color:#000;left:3.6px;transform-origin:0 0;transform:scaleX(0.9059);-webkit-text-stroke:0.2px currentColor;">System</span>
<span class="t" id="t64" style="top:429.00px;font-size:11.2px;line-height:12px;color:#000;left:100px;transform-origin:0 0;transform:scaleX(0.8822);-webkit-text-stroke:0.2px currentColor;">4</span>
<span class="t" id="t65" style="top:429.00px;font-size:11.2px;line-height:12px;color:#000;left:151px;transform-origin:0 0;transform:scaleX(1.0275);-webkit-text-stroke:0.2px currentColor;white-space:pre;">C:\Users\sonik\AppData\Local\Google\Chrome\User Data\De</span>
<span class="t" id="t66" style="top:446.00px;font-size:11.2px;line-height:12px;color:#000;left:3.6px;transform-origin:0 0;transform:scaleX(0.9059);-webkit-text-stroke:0.2px currentColor;">System</span>
<span class="t" id="t67" style="top:446.00px;font-size:11.2px;line-height:12px;color:#000;left:100px;transform-origin:0 0;transform:scaleX(0.8822);-webkit-text-stroke:0.2px currentColor;">4</span>
<span class="t" id="t68" style="top:446.00px;font-size:11.2px;line-height:12px;color:#000;left:151px;transform-origin:0 0;transform:scaleX(1.0275);-webkit-text-stroke:0.2px currentColor;white-space:pre;">C:\Users\sonik\AppData\Local\Google\Chrome\User Data\De</span>
<span class="t" id="t69" style="top:463.00px;font-size:11.2px;line-height:12px;color:#000;left:3.6px;transform-origin:0 0;transform:scaleX(0.9059);-webkit-text-stroke:0.2px currentColor;">System</span>
<span class="t" id="t70" style="top:463.00px;font-size:11.2px;line-height:12px;color:#000;left:100px;transform-origin:0 0;transform:scaleX(0.8822);-webkit-text-stroke:0.2px currentColor;">4</span>
<span class="t" id="t71" style="top:463.00px;font-size:11.2px;line-height:12px;color:#000;left:151px;transform-origin:0 0;transform:scaleX(0.9996);-webkit-text-stroke:0.2px currentColor;white-space:pre;">D:\$BitMap (Карта свободного места NTFS)</span>
<span class="t" id="t72" style="top:480.00px;font-size:11.2px;line-height:12px;color:#000;left:3.6px;transform-origin:0 0;transform:scaleX(0.9059);-webkit-text-stroke:0.2px currentColor;">System</span>
<span class="t" id="t73" style="top:480.00px;font-size:11.2px;line-height:12px;color:#000;left:100px;transform-origin:0 0;transform:scaleX(0.8822);-webkit-text-stroke:0.2px currentColor;">4</span>
<span class="t" id="t74" style="top:480.00px;font-size:11.2px;line-height:12px;color:#000;left:151px;transform-origin:0 0;transform:scaleX(0.9955);-webkit-text-stroke:0.2px currentColor;white-space:pre;">D:\$Extend\$UsnJrnl:$J</span>
<span class="t" id="t75" style="top:497.00px;font-size:11.2px;line-height:12px;color:#000;left:3.6px;transform-origin:0 0;transform:scaleX(0.9059);-webkit-text-stroke:0.2px currentColor;">System</span>
<span class="t" id="t76" style="top:497.00px;font-size:11.2px;line-height:12px;color:#000;left:100px;transform-origin:0 0;transform:scaleX(0.8822);-webkit-text-stroke:0.2px currentColor;">4</span>
<span class="t" id="t77" style="top:497.00px;font-size:11.2px;line-height:12px;color:#000;left:151px;transform-origin:0 0;transform:scaleX(1.0275);-webkit-text-stroke:0.2px currentColor;white-space:pre;">C:\Users\sonik\AppData\Local\Google\Chrome\User Data\De</span>
<span class="t" id="t78" style="top:514.00px;font-size:11.2px;line-height:12px;color:#000;left:3.6px;transform-origin:0 0;transform:scaleX(0.9059);-webkit-text-stroke:0.2px currentColor;">System</span>
<span class="t" id="t79" style="top:514.00px;font-size:11.2px;line-height:12px;color:#000;left:100px;transform-origin:0 0;transform:scaleX(0.8822);-webkit-text-stroke:0.2px currentColor;">4</span>
<span class="t" id="t80" style="top:514.00px;font-size:11.2px;line-height:12px;color:#000;left:151px;transform-origin:0 0;transform:scaleX(1.0275);-webkit-text-stroke:0.2px currentColor;white-space:pre;">C:\Users\sonik\AppData\Local\Google\Chrome\User Data\De</span>
<span class="t" id="t81" style="top:531.00px;font-size:11.2px;line-height:12px;color:#000;left:3.6px;transform-origin:0 0;transform:scaleX(0.9059);-webkit-text-stroke:0.2px currentColor;">System</span>
<span class="t" id="t82" style="top:531.00px;font-size:11.2px;line-height:12px;color:#000;left:100px;transform-origin:0 0;transform:scaleX(0.8822);-webkit-text-stroke:0.2px currentColor;">4</span>
<span class="t" id="t83" style="top:531.00px;font-size:11.2px;line-height:12px;color:#000;left:151px;transform-origin:0 0;transform:scaleX(1.0275);-webkit-text-stroke:0.2px currentColor;white-space:pre;">C:\Users\sonik\AppData\Local\Google\Chrome\User Data\De</span>
<span class="t" id="t84" style="top:548.00px;font-size:11.2px;line-height:12px;color:#000;left:3.6px;transform-origin:0 0;transform:scaleX(0.9059);-webkit-text-stroke:0.2px currentColor;">System</span>
<span class="t" id="t85" style="top:548.00px;font-size:11.2px;line-height:12px;color:#000;left:100px;transform-origin:0 0;transform:scaleX(0.8822);-webkit-text-stroke:0.2px currentColor;">4</span>
<span class="t" id="t86" style="top:565.00px;font-size:11.2px;line-height:12px;color:#000;left:3.6px;transform-origin:0 0;transform:scaleX(0.9059);-webkit-text-stroke:0.2px currentColor;">System</span>
<span class="t" id="t87" style="top:565.00px;font-size:11.2px;line-height:12px;color:#000;left:100px;transform-origin:0 0;transform:scaleX(0.8822);-webkit-text-stroke:0.2px currentColor;">4</span>
<span class="t" id="t88" style="top:565.00px;font-size:11.2px;line-height:12px;color:#000;left:151px;transform-origin:0 0;transform:scaleX(1.0275);-webkit-text-stroke:0.2px currentColor;white-space:pre;">C:\Users\sonik\AppData\Local\Google\Chrome\User Data\De</span>
<span class="t" id="t89" style="top:582.00px;font-size:11.2px;line-height:12px;color:#000;left:3.6px;transform-origin:0 0;transform:scaleX(0.9059);-webkit-text-stroke:0.2px currentColor;">System</span>
<span class="t" id="t90" style="top:582.00px;font-size:11.2px;line-height:12px;color:#000;left:100px;transform-origin:0 0;transform:scaleX(0.8822);-webkit-text-stroke:0.2px currentColor;">4</span>
<span class="t" id="t91" style="top:582.00px;font-size:11.2px;line-height:12px;color:#000;left:151px;transform-origin:0 0;transform:scaleX(1.0275);-webkit-text-stroke:0.2px currentColor;white-space:pre;">C:\Users\sonik\AppData\Local\Google\Chrome\User Data\De</span>
<span class="t" id="t92" style="top:599.00px;font-size:11.2px;line-height:12px;color:#000;left:3.6px;transform-origin:0 0;transform:scaleX(0.9059);-webkit-text-stroke:0.2px currentColor;">System</span>
<span class="t" id="t93" style="top:599.00px;font-size:11.2px;line-height:12px;color:#000;left:100px;transform-origin:0 0;transform:scaleX(0.8822);-webkit-text-stroke:0.2px currentColor;">4</span>
<span class="t" id="t94" style="top:599.00px;font-size:11.2px;line-height:12px;color:#000;left:151px;transform-origin:0 0;transform:scaleX(1.0088);-webkit-text-stroke:0.2px currentColor;white-space:pre;">C:\Windows\ServiceProfiles\LocalService\AppData\Local\lasta</span>
<span class="t" id="t95" style="top:616.00px;font-size:11.2px;line-height:12px;color:#000;left:3.6px;transform-origin:0 0;transform:scaleX(0.9059);-webkit-text-stroke:0.2px currentColor;">System</span>
<span class="t" id="t96" style="top:616.00px;font-size:11.2px;line-height:12px;color:#000;left:100px;transform-origin:0 0;transform:scaleX(0.8822);-webkit-text-stroke:0.2px currentColor;">4</span>
<span class="t" id="t97" style="top:616.00px;font-size:11.2px;line-height:12px;color:#000;left:151px;transform-origin:0 0;transform:scaleX(1.0275);-webkit-text-stroke:0.2px currentColor;white-space:pre;">C:\Users\sonik\AppData\Local\Google\Chrome\User Data\De</span>
<span class="t" id="t98" style="top:633.00px;font-size:11.2px;line-height:12px;color:#000;left:3.6px;transform-origin:0 0;transform:scaleX(0.9059);-webkit-text-stroke:0.2px currentColor;">System</span>
<span class="t" id="t99" style="top:633.00px;font-size:11.2px;line-height:12px;color:#000;left:100px;transform-origin:0 0;transform:scaleX(0.8822);-webkit-text-stroke:0.2px currentColor;">4</span>
<span class="t" id="t100" style="top:633.00px;font-size:11.2px;line-height:12px;color:#000;left:151px;transform-origin:0 0;transform:scaleX(1.0275);-webkit-text-stroke:0.2px currentColor;white-space:pre;">C:\Users\sonik\AppData\Local\Google\Chrome\User Data\De</span>
<span class="t" id="t101" style="top:650.00px;font-size:11.2px;line-height:12px;color:#000;left:3.6px;transform-origin:0 0;transform:scaleX(0.9059);-webkit-text-stroke:0.2px currentColor;">System</span>
<span class="t" id="t102" style="top:650.00px;font-size:11.2px;line-height:12px;color:#000;left:100px;transform-origin:0 0;transform:scaleX(0.8822);-webkit-text-stroke:0.2px currentColor;">4</span>
<span class="t" id="t103" style="top:650.00px;font-size:11.2px;line-height:12px;color:#000;left:151px;transform-origin:0 0;transform:scaleX(1.0275);-webkit-text-stroke:0.2px currentColor;white-space:pre;">C:\Users\sonik\AppData\Local\Google\Chrome\User Data\De</span>
<span class="t" id="t104" style="top:667.00px;font-size:11.2px;line-height:12px;color:#000;left:3.6px;transform-origin:0 0;transform:scaleX(0.9059);-webkit-text-stroke:0.2px currentColor;">System</span>
<span class="t" id="t105" style="top:667.00px;font-size:11.2px;line-height:12px;color:#000;left:100px;transform-origin:0 0;transform:scaleX(0.8822);-webkit-text-stroke:0.2px currentColor;">4</span>
<span class="t" id="t106" style="top:667.00px;font-size:11.2px;line-height:12px;color:#000;left:151px;transform-origin:0 0;transform:scaleX(1.0275);-webkit-text-stroke:0.2px currentColor;white-space:pre;">C:\Users\sonik\AppData\Local\Google\Chrome\User Data\De</span>
<span class="t" id="t107" style="top:548.00px;font-size:11.2px;line-height:12px;color:#666;left:151px;transform-origin:0 0;transform:scaleX(1.0235);z-index:5;">C:\Users\sonik\AppData\Local\Google\Chrome\User Data\Default\JumpListIcons\6E52.tmp</span>
<span class="t" id="t108" style="top:711.00px;font-size:14px;line-height:16px;color:#000;left:3.6px;transform-origin:0 0;transform:scaleX(0.9213);-webkit-text-stroke:0.1px currentColor;">Запоминающие устройства</span>
<span class="t" id="t109" style="top:740.00px;font-size:11.2px;line-height:12px;color:#000;left:3.3px;transform-origin:0 0;transform:scaleX(1.0608);-webkit-text-stroke:0.2px currentColor;">Логический диск</span>
<span class="t" id="t110" style="top:740.00px;font-size:11.2px;line-height:12px;color:#000;left:138.5px;transform-origin:0 0;transform:scaleX(0.9727);-webkit-text-stroke:0.2px currentColor;">Физи...</span>
<span class="t" id="t111" style="top:740.00px;font-size:11.2px;line-height:12px;color:#000;left:192.5px;transform-origin:0 0;transform:scaleX(1.0245);-webkit-text-stroke:0.2px currentColor;">Акти...</span>
<span class="t" id="t112" style="top:740.00px;font-size:11.2px;line-height:12px;color:#000;left:241px;transform-origin:0 0;transform:scaleX(0.9481);-webkit-text-stroke:0.2px currentColor;">Своб...</span>
<span class="t" id="t113" style="top:740.00px;font-size:11.2px;line-height:12px;color:#000;left:294.5px;transform-origin:0 0;transform:scaleX(0.9895);-webkit-text-stroke:0.2px currentColor;">Всег...</span>
<span class="t" id="t114" style="top:740.00px;font-size:11.2px;line-height:12px;color:#000;left:338.5px;transform-origin:0 0;transform:scaleX(1.0179);-webkit-text-stroke:0.2px currentColor;">Длин...</span>
<span class="t" id="t115" style="top:761.00px;font-size:11.2px;line-height:12px;color:#000;left:3.5px;transform-origin:0 0;transform:scaleX(0.7866);-webkit-text-stroke:0.2px currentColor;">C:</span>
<span class="t" id="t116" style="top:761.00px;font-size:11.2px;line-height:12px;color:#000;left:138.5px;transform-origin:0 0;transform:scaleX(0.8822);-webkit-text-stroke:0.2px currentColor;">2</span>
<span class="t" id="t117" style="top:761.00px;font-size:11.2px;line-height:12px;color:#000;right:785.7px;transform-origin:100% 0;transform:scaleX(0.9871);-webkit-text-stroke:0.2px currentColor;">0.00</span>
<span class="t" id="t118" style="top:761.00px;font-size:11.2px;line-height:12px;color:#000;right:736.2px;transform-origin:100% 0;transform:scaleX(0.9644);-webkit-text-stroke:0.2px currentColor;">71 227</span>
<span class="t" id="t119" style="top:761.00px;font-size:11.2px;line-height:12px;color:#000;right:686px;transform-origin:100% 0;transform:scaleX(0.9589);-webkit-text-stroke:0.2px currentColor;">114 4...</span>
<span class="t" id="t120" style="top:761.00px;font-size:11.2px;line-height:12px;color:#000;right:636px;transform-origin:100% 0;transform:scaleX(0.9871);-webkit-text-stroke:0.2px currentColor;">0.00</span>
<span class="t" id="t121" style="top:778.00px;font-size:11.2px;line-height:12px;color:#000;left:3.5px;transform-origin:0 0;transform:scaleX(0.7866);-webkit-text-stroke:0.2px currentColor;">D:</span>
<span class="t" id="t122" style="top:778.00px;font-size:11.2px;line-height:12px;color:#000;left:138.5px;transform-origin:0 0;transform:scaleX(0.8822);-webkit-text-stroke:0.2px currentColor;">0</span>
<span class="t" id="t123" style="top:778.00px;font-size:11.2px;line-height:12px;color:#000;right:785.7px;transform-origin:100% 0;transform:scaleX(0.9871);-webkit-text-stroke:0.2px currentColor;">0.00</span>
<span class="t" id="t124" style="top:778.00px;font-size:11.2px;line-height:12px;color:#000;right:736.2px;transform-origin:100% 0;transform:scaleX(0.9376);-webkit-text-stroke:0.2px currentColor;">233 6...</span>
<span class="t" id="t125" style="top:778.00px;font-size:11.2px;line-height:12px;color:#000;right:686px;transform-origin:100% 0;transform:scaleX(0.9376);-webkit-text-stroke:0.2px currentColor;">284 1...</span>
<span class="t" id="t126" style="top:778.00px;font-size:11.2px;line-height:12px;color:#000;right:636px;transform-origin:100% 0;transform:scaleX(0.9871);-webkit-text-stroke:0.2px currentColor;">0.00</span>
<span class="t" id="t127" style="top:795.00px;font-size:11.2px;line-height:12px;color:#000;left:3.5px;transform-origin:0 0;transform:scaleX(0.8319);-webkit-text-stroke:0.2px currentColor;">X:</span>
<span class="t" id="t128" style="top:795.00px;font-size:11.2px;line-height:12px;color:#000;left:138.5px;transform-origin:0 0;transform:scaleX(0.8822);-webkit-text-stroke:0.2px currentColor;">1</span>
<span class="t" id="t129" style="top:795.00px;font-size:11.2px;line-height:12px;color:#000;right:785.7px;transform-origin:100% 0;transform:scaleX(0.9871);-webkit-text-stroke:0.2px currentColor;">0.00</span>
<span class="t" id="t130" style="top:795.00px;font-size:11.2px;line-height:12px;color:#000;right:736.2px;transform-origin:100% 0;transform:scaleX(0.9644);-webkit-text-stroke:0.2px currentColor;">48 739</span>
<span class="t" id="t131" style="top:795.00px;font-size:11.2px;line-height:12px;color:#000;right:686px;transform-origin:100% 0;transform:scaleX(0.9644);-webkit-text-stroke:0.2px currentColor;">56 738</span>
<span class="t" id="t132" style="top:795.00px;font-size:11.2px;line-height:12px;color:#000;right:636px;transform-origin:100% 0;transform:scaleX(0.9871);-webkit-text-stroke:0.2px currentColor;">0.00</span>
<span class="t" id="t133" style="top:812.00px;font-size:11.2px;line-height:12px;color:#000;left:3.5px;transform-origin:0 0;transform:scaleX(0.8841);-webkit-text-stroke:0.2px currentColor;">Z:</span>
<span class="t" id="t134" style="top:812.00px;font-size:11.2px;line-height:12px;color:#000;left:138.5px;transform-origin:0 0;transform:scaleX(0.8822);-webkit-text-stroke:0.2px currentColor;">3</span>
<span class="t" id="t135" style="top:812.00px;font-size:11.2px;line-height:12px;color:#000;right:785.7px;transform-origin:100% 0;transform:scaleX(0.9871);-webkit-text-stroke:0.2px currentColor;">0.00</span>
<span class="t" id="t136" style="top:812.00px;font-size:11.2px;line-height:12px;color:#000;right:736.2px;transform-origin:100% 0;transform:scaleX(0.9644);-webkit-text-stroke:0.2px currentColor;">24 608</span>
<span class="t" id="t137" style="top:812.00px;font-size:11.2px;line-height:12px;color:#000;right:686px;transform-origin:100% 0;transform:scaleX(0.9644);-webkit-text-stroke:0.2px currentColor;">38 162</span>
<span class="t" id="t138" style="top:812.00px;font-size:11.2px;line-height:12px;color:#000;right:636px;transform-origin:100% 0;transform:scaleX(0.9871);-webkit-text-stroke:0.2px currentColor;">0.00</span>
<span class="t" id="t139" style="top:90.00px;font-size:12px;line-height:14px;color:#000;left:939.5px;transform-origin:0 0;transform:translateX(-47.19%) scaleX(0.9439);-webkit-text-stroke:0.2px currentColor;">Вид</span>
<span class="t" id="t140" style="top:116.00px;font-size:11.6px;line-height:12px;color:#000;left:516px;transform-origin:0 0;transform:scaleX(1.0713);-webkit-text-stroke:0.2px currentColor;">Диск</span>
<span class="t" id="t141" style="top:116.00px;font-size:11.6px;line-height:12px;color:#000;right:27px;transform-origin:100% 0;transform:scaleX(1.0688);-webkit-text-stroke:0.2px currentColor;">1 Мбит/с</span>
<span class="t" id="t142" style="top:238.00px;font-size:11.6px;line-height:12px;color:#000;right:27px;transform-origin:100% 0;transform:scaleX(0.8523);-webkit-text-stroke:0.2px currentColor;">0</span>
<span class="t" id="t143" style="top:238.00px;font-size:11.6px;line-height:12px;color:#000;left:516.4px;transform-origin:0 0;transform:scaleX(0.9823);-webkit-text-stroke:0.2px currentColor;">60 секунд</span>
<span class="t" id="t144" style="top:254.00px;font-size:11.6px;line-height:12px;color:#000;left:516px;transform-origin:0 0;transform:scaleX(1.0002);-webkit-text-stroke:0.2px currentColor;">Длина очереди диска 0 (D:)</span>
<span class="t" id="t145" style="top:254.00px;font-size:11.6px;line-height:12px;color:#000;right:27px;transform-origin:100% 0;transform:scaleX(0.9522);-webkit-text-stroke:0.2px currentColor;">0.01</span>
<span class="t" id="t146" style="top:376.00px;font-size:11.6px;line-height:12px;color:#000;right:27px;transform-origin:100% 0;transform:scaleX(0.8523);-webkit-text-stroke:0.2px currentColor;">0</span>
<span class="t" id="t147" style="top:392.00px;font-size:11.6px;line-height:12px;color:#000;left:516px;transform-origin:0 0;transform:scaleX(0.9944);-webkit-text-stroke:0.2px currentColor;">Длина очереди диска 1 (X:)</span>
<span class="t" id="t148" style="top:392.00px;font-size:11.6px;line-height:12px;color:#000;right:27px;transform-origin:100% 0;transform:scaleX(0.6973);-webkit-text-stroke:0.2px currentColor;">1</span>
<span class="t" id="t149" style="top:514.00px;font-size:11.6px;line-height:12px;color:#000;right:27px;transform-origin:100% 0;transform:scaleX(0.8523);-webkit-text-stroke:0.2px currentColor;">0</span>
<span class="t" id="t150" style="top:530.00px;font-size:11.6px;line-height:12px;color:#000;left:516px;transform-origin:0 0;transform:scaleX(1.0002);-webkit-text-stroke:0.2px currentColor;">Длина очереди диска 2 (C:)</span>
<span class="t" id="t151" style="top:530.00px;font-size:11.6px;line-height:12px;color:#000;right:27px;transform-origin:100% 0;transform:scaleX(0.9522);-webkit-text-stroke:0.2px currentColor;">0.01</span>
<span class="t" id="t152" style="top:652.00px;font-size:11.6px;line-height:12px;color:#000;right:27px;transform-origin:100% 0;transform:scaleX(0.8523);-webkit-text-stroke:0.2px currentColor;">0</span>
<span class="t" id="t153" style="top:668.00px;font-size:11.6px;line-height:12px;color:#000;left:516px;transform-origin:0 0;transform:scaleX(0.9987);-webkit-text-stroke:0.2px currentColor;">Длина очереди диска 3 (Z:)</span>
<span class="t" id="t154" style="top:668.00px;font-size:11.6px;line-height:12px;color:#000;right:27px;transform-origin:100% 0;transform:scaleX(0.6973);-webkit-text-stroke:0.2px currentColor;">1</span>
<span class="t" id="t155" style="top:790.00px;font-size:11.6px;line-height:12px;color:#000;right:27px;transform-origin:100% 0;transform:scaleX(0.8523);-webkit-text-stroke:0.2px currentColor;">0</span>
</div>
</body></html>
